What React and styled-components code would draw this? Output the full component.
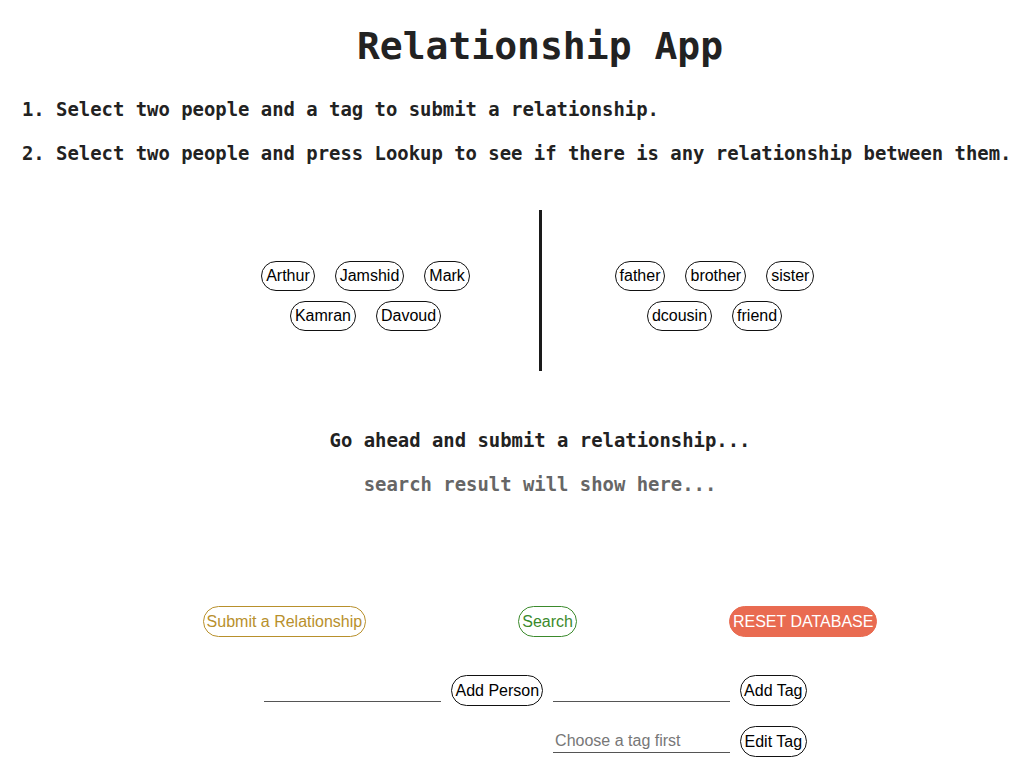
import React from "react";
import styled, { createGlobalStyle } from "styled-components";

const Global = createGlobalStyle`
  html, body { margin: 0; padding: 0; overflow-x: hidden; background: #fff; }
  body { margin: 8px; }
`;

const Page = styled.div`
  width: 1064px;
  display: flex;
  flex-direction: column;
  align-items: center;
  font-family: "DejaVu Sans Mono", "Liberation Mono", monospace;
  color: #222;
`;

const Title = styled.h1`
  margin: 16px 0 0;
  font-size: 38px;
  line-height: 44px;
  font-weight: bold;
  color: #222;
`;

const Steps = styled.div`
  align-self: stretch;
  padding-left: 14px;
  margin-top: 30px;
  display: flex;
  flex-direction: column;
  gap: 22px;
`;

const Step = styled.p`
  margin: 0;
  font-size: 18.9px;
  line-height: 22px;
  font-weight: bold;
  white-space: nowrap;
  color: #222;
`;

const Picker = styled.div`
  margin-top: 46px;
  display: flex;
  align-items: center;
  gap: 48px;
`;

const Panel = styled.div`
  width: 250px;
  padding-top: 10px;
  display: flex;
  flex-wrap: wrap;
  justify-content: center;
  column-gap: 20px;
  row-gap: 10px;
`;

const Divider = styled.div`
  width: 3px;
  height: 161px;
  background: #1a1a1a;
`;

const Chip = styled.button`
  font-family: "Liberation Sans", Arial, sans-serif;
  font-size: 16px;
  line-height: 18px;
  padding: 5px 4px;
  border: 1px solid #111;
  border-radius: 15px;
  background: #fff;
  color: #000;
`;

const Status = styled.p`
  margin: 0;
  font-size: 18.9px;
  line-height: 22px;
  font-weight: bold;
  color: ${(p) => (p.$muted ? "#666" : "#222")};
  margin-top: ${(p) => p.$top}px;
`;

const Actions = styled.div`
  margin-top: 111px;
  display: flex;
  align-items: center;
  gap: 152px;
`;

const ActionButton = styled.button`
  font-family: "Liberation Sans", Arial, sans-serif;
  font-size: 16px;
  line-height: 19px;
  padding: 5px 3px;
  border-radius: 16px;
  border: 1px solid ${(p) => p.$color};
  background: ${(p) => (p.$filled ? p.$color : "#fff")};
  color: ${(p) => (p.$filled ? "#fff" : p.$color)};
`;

const Editor = styled.div`
  margin-top: 38px;
  margin-right: 9px;
  display: grid;
  grid-template-columns: 177px auto 177px auto;
  column-gap: 10px;
  row-gap: 20px;
  align-items: center;
`;

const Field = styled.input`
  grid-column: ${(p) => p.$col};
  width: 177px;
  height: 22px;
  box-sizing: border-box;
  padding: 0 2px;
  border: none;
  border-bottom: 1px solid #555;
  outline: none;
  font-family: "Liberation Sans", Arial, sans-serif;
  font-size: 16px;
  color: #000;
  &::placeholder { color: #777; }
`;

const SmallButton = styled.button`
  grid-column: ${(p) => p.$col};
  font-family: "Liberation Sans", Arial, sans-serif;
  font-size: 16px;
  line-height: 19px;
  padding: 5px 3px;
  border: 1px solid #111;
  border-radius: 16px;
  background: #fff;
  color: #000;
`;

const people = ["Arthur", "Jamshid", "Mark", "Kamran", "Davoud"];
const tags = ["father", "brother", "sister", "dcousin", "friend"];

export default function App() {
  return (
    <>
      <Global />
      <Page>
        <Title>Relationship App</Title>
        <Steps>
          <Step>1. Select two people and a tag to submit a relationship.</Step>
          <Step>
            2. Select two people and press Lookup to see if there is any
            relationship between them.
          </Step>
        </Steps>
        <Picker>
          <Panel>
            {people.map((p) => (
              <Chip key={p}>{p}</Chip>
            ))}
          </Panel>
          <Divider />
          <Panel>
            {tags.map((t) => (
              <Chip key={t}>{t}</Chip>
            ))}
          </Panel>
        </Picker>
        <Status $top={58}>Go ahead and submit a relationship...</Status>
        <Status $muted $top={22}>search result will show here...</Status>
        <Actions>
          <ActionButton $color="#b8902c">Submit a Relationship</ActionButton>
          <ActionButton $color="#3b8a2c">Search</ActionButton>
          <ActionButton $color="#e96b51" $filled>
            RESET DATABASE
          </ActionButton>
        </Actions>
        <Editor>
          <Field $col={1} />
          <SmallButton $col={2}>Add Person</SmallButton>
          <Field $col={3} />
          <SmallButton $col={4}>Add Tag</SmallButton>
          <Field $col={3} placeholder="Choose a tag first" />
          <SmallButton $col={4}>Edit Tag</SmallButton>
        </Editor>
      </Page>
    </>
  );
}
